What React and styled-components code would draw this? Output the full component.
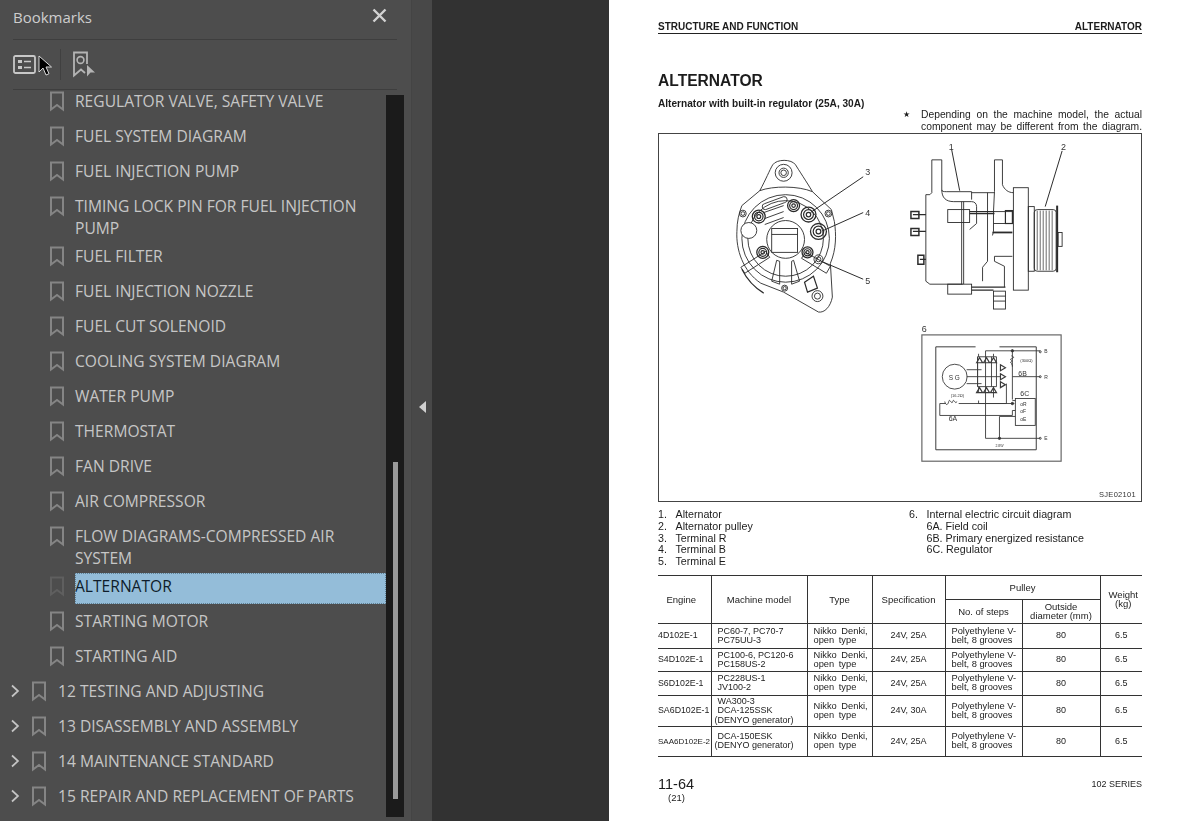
import React from "react";
import styled, { createGlobalStyle } from "styled-components";

const GlobalStyle = createGlobalStyle`
  html, body {
    margin: 0;
    padding: 0;
    height: 821px;
    overflow: hidden;
    background: #323232;
  }
`;

const bookmarks = [
  { label: "REGULATOR VALVE, SAFETY VALVE" },
  { label: "FUEL SYSTEM DIAGRAM" },
  { label: "FUEL INJECTION PUMP" },
  { label: "TIMING LOCK PIN FOR FUEL INJECTION PUMP" },
  { label: "FUEL FILTER" },
  { label: "FUEL INJECTION NOZZLE" },
  { label: "FUEL CUT SOLENOID" },
  { label: "COOLING SYSTEM DIAGRAM" },
  { label: "WATER PUMP" },
  { label: "THERMOSTAT" },
  { label: "FAN DRIVE" },
  { label: "AIR COMPRESSOR" },
  { label: "FLOW DIAGRAMS-COMPRESSED AIR SYSTEM" },
  { label: "ALTERNATOR", selected: true },
  { label: "STARTING MOTOR" },
  { label: "STARTING AID" },
  { label: "12 TESTING AND ADJUSTING", top: true },
  { label: "13 DISASSEMBLY AND ASSEMBLY", top: true },
  { label: "14 MAINTENANCE STANDARD", top: true },
  { label: "15 REPAIR AND REPLACEMENT OF PARTS", top: true },
];

const tableRows = [
  { h: 25, engine: "4D102E-1", model: ["PC60-7, PC70-7", "PC75UU-3"], spec: "24V, 25A" },
  { h: 23, engine: "S4D102E-1", model: ["PC100-6, PC120-6", "PC158US-2"], spec: "24V, 25A" },
  { h: 24, engine: "S6D102E-1", model: ["PC228US-1", "JV100-2"], spec: "24V, 25A" },
  { h: 31, engine: "SA6D102E-1", model: ["WA300-3", "DCA-125SSK", "(DENYO generator)"], spec: "24V, 30A" },
  { h: 30, engine: "SAA6D102E-2", model: ["DCA-150ESK", "(DENYO generator)"], spec: "24V, 25A", small: true },
];

const BookmarkIcon = ({ faded }) => (
  <svg width="14" height="21" viewBox="0 0 14 21" fill="none" stroke={faded ? "#5f5f5f" : "#858585"} strokeWidth="2">
    <path d="M1 1.500h12v17l-6-4.500-6 4.500z" />
  </svg>
);

const Chevron = () => (
  <svg width="10" height="14" viewBox="0 0 10 14" fill="none" stroke="#c4c4c4" strokeWidth="1.700">
    <path d="M2 1.500 8 7l-6 5.500" />
  </svg>
);

const Lug = ({ x, y, r }) => (
  <g>
    <circle cx={x} cy={y} r={r} />
    <circle cx={x} cy={y} r={r * 0.55} />
  </g>
);

const Stud = ({ x, y, r }) => (
  <g>
    <circle cx={x} cy={y} r={r} strokeWidth="1.300" />
    <circle cx={x} cy={y} r={r * 0.66} strokeWidth="1.200" />
    <circle cx={x} cy={y} r={r * 0.3} strokeWidth="1.200" />
  </g>
);

// 부품도: 왼쪽 배면, 오른쪽 측면, 아래 회로도
const Drawing = () => (
  <DrawingSvg viewBox="658 134 484 367" fill="none" stroke="#2b2b2b" strokeWidth="0.9">
    <g>
      <path d="M759 191C765 180 769 170 772 165C776 159 791 159 795 165C798 170 806 182 812 192" />
      <path d="M741 206 759 191C772 186 798 186 812 192L831 210L834 222C836 235 836 250 830 264L832 298C830 308 824 314 818 313L783 293L760 284C742 272 735 250 736 232C736 222 738 214 741 206z" />
      <Lug x={783} y={173} r={8.500} />
      <circle cx={783} cy={173} r={2.800} />
      <circle cx={785} cy={239} r={44} />
      <circle cx={785} cy={239} r={38} />
      <circle cx={785} cy={240} r={19} />
      <rect x={771} y={229} width={26} height={24} />
      <path d="M771 235h26" />
      <path d="M764 204 783 197a3 3 0 0 1 1 6l-19 7a3 3 0 0 1-1-6zM763 213l20-7M764 219l19-7M764 225l19-7" />
      <circle cx={748} cy={231} r={8} fill="#fff" />
      <Stud x={758} y={217} r={6.500} />
      <Stud x={793} y={206} r={6} />
      <Stud x={808} y={215} r={7.500} />
      <Stud x={818} y={232} r={8} />
      <Stud x={762} y={253} r={6} />
      <Stud x={807} y={253} r={5.500} />
      <Lug x={818} y={260} r={4.500} />
      <Lug x={817} y={297} r={5.500} />
      <Lug x={742} y={214} r={3.400} />
      <Lug x={828} y={214} r={3.400} />
      <Lug x={784} y={289} r={3} />
      <path d="M740 268 765 252l4 6-25 16zM830 267 805 253l-4 6 25 15z" />
      <path d="M776 261 771 282l8 3V262zM793 261l6 21-8 3V262z" />
      <path d="M804 283l9-6 4 12-10 4zM741 270c5 10 12 18 22 24" strokeWidth="1.200" />
      <path d="M810 213 863 177M823 231 863 213M821 262 863 280" strokeWidth="1" />
    </g>
    <g>
      <path d="M932 160h10v30c0 2 2 2 5 2h25v8M932 160v33l-2 2h-4v87l4 3h33" />
      <path d="M942 190c0 8 4 12 12 12h18c3 0 5 2 5 5v17l-7 6M962 202v83M964 202v83" />
      <path d="M995 160h8v25c2 5 6 8 11 8M995 160v32l-1 20v20l-1 4" />
      <path d="M972 193h23M988 193v69l-5 6v14" />
      <rect x={948} y={210} width={22} height={13} />
      <path d="M970 212h25M970 214h25" strokeWidth="1.300" />
      <rect x={1006} y={211} width={7} height={13} strokeWidth="1.200" />
      <path d="M994 212h19M994 224h19" />
      <path d="M993 233h20" strokeWidth="1.800" />
      <path d="M995 257h18M1005 267v21M995 257v5l10 5" />
      <rect x={1014} y={188} width={15} height={103} />
      <rect x={1029} y={207} width={6} height={65} />
      <rect x={1035} y={210} width={22} height={62} rx={3} />
      <path d="M1038 211v60M1041 211v60M1044 211v60M1047 211v60M1050 211v60M1053 211v60" strokeWidth="0.7" />
      <path d="M1058 206v67" strokeWidth="2" />
      <rect x={1059} y={233} width={4} height={14} />
      <rect x={994} y={292} width={12} height={18} />
      <path d="M994 297h12M994 302h12" />
      <rect x={948} y={285} width={24} height={10} />
      <path d="M972 288h34M972 291h22" strokeWidth="1.200" />
      <path d="M913 215h13M913 232h13M920 260h6" strokeWidth="1.200" />
      <path d="M911 212h8v7h-8zM911 229h8v7h-8zM918 256h6v9h-6z" strokeWidth="1.500" />
      <path d="M952 150 960 191M1063 151 1046 207" strokeWidth="1" />
    </g>
    <g stroke="#3a3a3a">
      <rect x={922} y={336} width={140} height={127} strokeWidth="1.200" stroke="#666" />
      <path d="M976 348h-40v103.500h101V348h-37" strokeWidth="1" />
      <circle cx={955} cy={378} r={12.500} />
      <path d="M967 371h15M967 378h34M967 385h15" />
      <path d="M986 352h55M1013 352v16M1013 366v35M986 352v88h55" />
      <path d="M978 358h19v30h-19zM978 358v30" />
      <path d="M992 358v30" />
      <path d="M977 364l3-5 3 5zM984 364l3-5 3 5zM991 364l3-5 3 5zM977 394l3-5 3 5zM984 394l3-5 3 5zM991 394l3-5 3 5z" strokeWidth="1.200" />
      <path d="M1001 366l5 3-5 3zM1001 375l5 3-5 3zM1001 383l5 3-5 3z" strokeWidth="1.200" />
      <path d="M979 358v-3M979 388v6M994 355v3M994 388v11M979 402v3h28v-20M1013 378h28" />
      <path d="M940 405h6M959 405h56M940 405v12h73v-5h3" />
      <path d="M1000 440v-22h16" />
      <path d="M945 403c1 4 3 4 4 0s3 4 4 0 3 4 4 0" />
      <path d="M1012 357c3 1 3 2 0 3s3 2 0 3 3 2 0 3" />
      <rect x={1016} y={400} width={20} height={27} />
      <path d="M1013 402h3" />
      <circle cx={1041} cy={353} r={1} />
      <circle cx={1041} cy={378} r={1} />
      <circle cx={1041} cy={440} r={1} />
      <circle cx={1013} cy={352} r={1.200} fill="#333" />
      <circle cx={1000} cy={440} r={1.200} fill="#333" />
      <circle cx={1013} cy={405} r={1.200} fill="#333" />
    </g>
    <DrawingLabel x={865} y={175}>3</DrawingLabel>
    <DrawingLabel x={865} y={216}>4</DrawingLabel>
    <DrawingLabel x={865} y={285}>5</DrawingLabel>
    <DrawingLabel x={949} y={150}>1</DrawingLabel>
    <DrawingLabel x={1062} y={150}>2</DrawingLabel>
    <DrawingLabel x={922} y={333}>6</DrawingLabel>
    <CircuitLabel x={949} y={381} $size={6.500}>S G</CircuitLabel>
    <CircuitLabel x={951} y={398} $size={4}>(16.2Ω)</CircuitLabel>
    <CircuitLabel x={949} y={423} $size={7}>6A</CircuitLabel>
    <CircuitLabel x={1019} y={377} $size={7}>6B</CircuitLabel>
    <CircuitLabel x={1021} y={397} $size={7}>6C</CircuitLabel>
    <CircuitLabel x={1021} y={363} $size={4}>(300Ω)</CircuitLabel>
    <CircuitLabel x={1045} y={354} $size={5}>B</CircuitLabel>
    <CircuitLabel x={1045} y={380} $size={5}>R</CircuitLabel>
    <CircuitLabel x={1045} y={442} $size={5}>E</CircuitLabel>
    <CircuitLabel x={1021} y={408} $size={5}>oR</CircuitLabel>
    <CircuitLabel x={1021} y={415} $size={5}>oF</CircuitLabel>
    <CircuitLabel x={1021} y={423} $size={5}>oE</CircuitLabel>
    <CircuitLabel x={996} y={449} $size={3.500}>2.8W</CircuitLabel>
  </DrawingSvg>
);

const App = () => {
  return (
    <>
      <GlobalStyle />
      <Screen>
        <Sidebar>
          <PanelHeader>
            <PanelTitle>Bookmarks</PanelTitle>
            <CloseIcon width="15" height="15" viewBox="0 0 15 15" fill="none" stroke="#d2d2d2" strokeWidth="2.400">
              <path d="M1.500 1.500l12 12M13.500 1.500l-12 12" />
            </CloseIcon>
          </PanelHeader>
          <Toolbar>
            <svg width="24" height="20" viewBox="0 0 24 20" fill="none">
              <rect x="1" y="1" width="21" height="17" rx="1.500" stroke="#c8c8c8" strokeWidth="1.800" />
              <rect x="5" y="5" width="4" height="3" fill="#c8c8c8" />
              <rect x="5" y="11" width="4" height="3" fill="#c8c8c8" />
              <path d="M11 6.500h7M11 12.500h7" stroke="#c8c8c8" strokeWidth="1.500" />
            </svg>
            <Cursor width="14" height="22" viewBox="0 0 14 22">
              <path d="M1 1v16l4-4 3 7 3-1.300-3-6.700h5.500z" fill="#000" stroke="#d8d8d8" strokeWidth="1" />
            </Cursor>
            <ToolDivider />
            <svg width="23" height="27" viewBox="0 0 23 27" fill="none">
              <path d="M14 13V1.500H1v23l7-6 4 3.500" stroke="#b4b4b4" strokeWidth="1.800" />
              <circle cx="7.500" cy="9" r="3.400" stroke="#b4b4b4" strokeWidth="1.600" />
              <path d="M14 14l8 7.500h-4.500l-3.500 4z" fill="#b4b4b4" />
            </svg>
          </Toolbar>
          <ListArea>
            <List>
              {bookmarks.map((b) => (
                <Row key={b.label} $top={b.top}>
                  {b.top && (
                    <ChevronCell>
                      <Chevron />
                    </ChevronCell>
                  )}
                  <IconCell $top={b.top}>
                    <BookmarkIcon faded={b.selected} />
                  </IconCell>
                  <Label $selected={b.selected}>{b.label}</Label>
                </Row>
              ))}
            </List>
            <ScrollTrack>
              <ScrollThumb />
            </ScrollTrack>
          </ListArea>
        </Sidebar>
        <Splitter>
          <svg width="9" height="14" viewBox="0 0 9 14">
            <path d="M8 1v12L1 7z" fill="#d0d0d0" />
          </svg>
        </Splitter>
        <Gutter />
        <Page>
          <RunningHead>
            <span>STRUCTURE AND FUNCTION</span>
            <span>ALTERNATOR</span>
          </RunningHead>
          <Title>ALTERNATOR</Title>
          <Subtitle>Alternator with built-in regulator (25A, 30A)</Subtitle>
          <Note>
            <Star>★</Star>
            <NoteText>
              <NoteLine>Depending on the machine model, the actual</NoteLine>
              <NoteLine>component may be different from the diagram.</NoteLine>
            </NoteText>
          </Note>
          <DiagramBox>
            <Drawing />
            <DrawingCode>SJE02101</DrawingCode>
          </DiagramBox>
          <Legend>
            <LegendColumn $first>
              <LegendItem><b>1.</b>Alternator</LegendItem>
              <LegendItem><b>2.</b>Alternator pulley</LegendItem>
              <LegendItem><b>3.</b>Terminal R</LegendItem>
              <LegendItem><b>4.</b>Terminal B</LegendItem>
              <LegendItem><b>5.</b>Terminal E</LegendItem>
            </LegendColumn>
            <LegendColumn>
              <LegendItem><b>6.</b>Internal electric circuit diagram</LegendItem>
              <LegendItem><b>&nbsp;</b>6A. Field coil</LegendItem>
              <LegendItem><b>&nbsp;</b>6B. Primary energized resistance</LegendItem>
              <LegendItem><b>&nbsp;</b>6C. Regulator</LegendItem>
            </LegendColumn>
          </Legend>
          <SpecTable>
            <colgroup>
              <col style={{ width: 53 }} />
              <col style={{ width: 96 }} />
              <col style={{ width: 65 }} />
              <col style={{ width: 73 }} />
              <col style={{ width: 77 }} />
              <col style={{ width: 78 }} />
              <col style={{ width: 42 }} />
            </colgroup>
            <thead>
              <HeadRow>
                <EngineHead rowSpan={2}>Engine</EngineHead>
                <Th rowSpan={2}>Machine model</Th>
                <Th rowSpan={2}>Type</Th>
                <Th rowSpan={2}>Specification</Th>
                <Th colSpan={2}>Pulley</Th>
                <WeightHead rowSpan={2}>Weight<br />(kg)</WeightHead>
              </HeadRow>
              <HeadRow>
                <Th>No. of steps</Th>
                <Th>Outside<br />diameter (mm)</Th>
              </HeadRow>
            </thead>
            <tbody>
              {tableRows.map((r) => (
                <tr key={r.engine} style={{ height: r.h }}>
                  <EngineCell $small={r.small}>{r.engine}</EngineCell>
                  <ModelCell>
                    {r.model.map((m) => (
                      <div key={m}>{m.startsWith("(") ? m : <Indent>{m}</Indent>}</div>
                    ))}
                  </ModelCell>
                  <TextCell $spread>Nikko Denki,<br />open type</TextCell>
                  <Td>{r.spec}</Td>
                  <TextCell>Polyethylene V-<br />belt, 8 grooves</TextCell>
                  <Td>80</Td>
                  <Td>6.5</Td>
                </tr>
              ))}
            </tbody>
          </SpecTable>
          <PageFooter>
            <div>
              <PageNumber>11-64</PageNumber>
              <PageSub>(21)</PageSub>
            </div>
            <Series>102 SERIES</Series>
          </PageFooter>
        </Page>
      </Screen>
    </>
  );
};

export default App;

const Screen = styled.div`
  display: flex;
  width: 1200px;
  height: 821px;
  overflow: hidden;
  font-family: "Liberation Sans", Arial, sans-serif;
`;

const Sidebar = styled.aside`
  width: 411px;
  flex: none;
  display: flex;
  flex-direction: column;
  background: #4d4d4d;
  border-right: 1px solid #444;
  box-sizing: content-box;
`;

const PanelHeader = styled.div`
  height: 39px;
  margin: 0 14px 0 13px;
  display: flex;
  align-items: center;
  justify-content: space-between;
  border-bottom: 1px solid #3e3e3e;
`;

const PanelTitle = styled.div`
  font-family: "Open Sans", sans-serif;
  font-size: 15px;
  color: #cdcdcd;
  margin-top: -6px;
`;

const CloseIcon = styled.svg`
  margin: -8px 10px 0 0;
`;

const Toolbar = styled.div`
  position: relative;
  height: 49px;
  margin: 0 14px 0 13px;
  display: flex;
  align-items: center;
  border-bottom: 1px solid #3e3e3e;
`;

const Cursor = styled.svg`
  position: absolute;
  left: 25px;
  top: 15px;
`;

const ToolDivider = styled.div`
  width: 1px;
  height: 31px;
  background: #404040;
  margin: 0 12px 0 23px;
`;

const ListArea = styled.div`
  flex: 1;
  display: flex;
  min-height: 0;
`;

const List = styled.div`
  width: 386px;
  flex: none;
  margin-top: -3px;
`;

const Row = styled.div`
  display: flex;
  align-items: flex-start;
  min-height: 35px;
  box-sizing: border-box;
  padding: 3px 0 3px ${(p) => (p.$top ? "10px" : "50px")};
`;

const ChevronCell = styled.div`
  width: 22px;
  height: 22px;
  display: flex;
  align-items: center;
`;

const IconCell = styled.div`
  width: ${(p) => (p.$top ? "26px" : "25px")};
  height: 22px;
  flex: none;
  display: flex;
  align-items: center;
`;

const Label = styled.div`
  flex: 1;
  font-family: "Open Sans", sans-serif;
  font-size: 15.600px;
  line-height: 22px;
  color: ${(p) => (p.$selected ? "#0f1d2b" : "#c6c6c6")};
  background: ${(p) => (p.$selected ? "#94bdd9" : "transparent")};
  outline: ${(p) => (p.$selected ? "1px dotted #5f7f93" : "none")};
  outline-offset: -1px;
  margin: ${(p) => (p.$selected ? "-2px 0 -3px" : "0")};
  padding: ${(p) => (p.$selected ? "2px 0 7px" : "0")};
  padding-right: 8px;
`;

const ScrollTrack = styled.div`
  width: 18px;
  height: 722px;
  margin-top: 5px;
  flex: none;
  background: #1b1b1b;
  position: relative;
`;

const ScrollThumb = styled.div`
  position: absolute;
  left: 7px;
  right: 6px;
  top: 367px;
  height: 337px;
  background: #9a9a9a;
`;

const Splitter = styled.div`
  width: 20px;
  flex: none;
  display: flex;
  align-items: center;
  justify-content: center;
  background: #484848;
  padding-bottom: 8px;
  box-sizing: border-box;
`;

const Gutter = styled.div`
  width: 177px;
  flex: none;
  background: #323232;
`;

const Page = styled.main`
  width: 591px;
  flex: none;
  background: #fff;
  color: #1c1c1c;
  box-sizing: border-box;
  padding: 21px 58px 0 49px;
  filter: blur(0.3px);
`;

const RunningHead = styled.div`
  display: flex;
  justify-content: space-between;
  font-size: 10px;
  font-weight: 700;
  line-height: 12px;
  border-bottom: 1px solid #222;
`;

const Title = styled.h1`
  margin: 37px 0 0;
  font-size: 15.600px;
  line-height: 19px;
  font-weight: 700;
`;

const Subtitle = styled.div`
  margin-top: 8px;
  font-size: 10.100px;
  line-height: 11px;
  font-weight: 700;
`;

const Note = styled.div`
  display: flex;
  justify-content: flex-end;
  font-size: 10.300px;
  line-height: 11.500px;
`;

const Star = styled.span`
  width: 18px;
  font-size: 8px;
`;

const NoteText = styled.div`
  width: 221px;
`;

const NoteLine = styled.div`
  text-align: justify;
  text-align-last: justify;
`;

const DiagramBox = styled.div`
  position: relative;
  height: 367px;
  margin-top: 1px;
  border: 1px solid #444;
  box-sizing: content-box;
  width: 482px;
`;

const DrawingSvg = styled.svg`
  display: block;
  width: 482px;
  height: 365px;
`;

const DrawingLabel = styled.text`
  font-family: "Liberation Sans", sans-serif;
  font-size: 9px;
  fill: #333;
  stroke: none;
`;

const CircuitLabel = styled.text`
  font-family: "Liberation Sans", sans-serif;
  font-size: ${(p) => p.$size}px;
  fill: #333;
  stroke: none;
`;

const DrawingCode = styled.div`
  position: absolute;
  right: 5px;
  bottom: 2px;
  font-size: 7.500px;
  letter-spacing: 0.3px;
  color: #333;
`;

const Legend = styled.div`
  display: flex;
  margin-top: 7px;
  font-size: 10.700px;
  line-height: 11.800px;
`;

const LegendColumn = styled.div`
  flex: ${(p) => (p.$first ? "0 0 251px" : "1")};
`;

const LegendItem = styled.div`
  display: flex;
  b {
    font-weight: 400;
    width: 17.500px;
  }
`;

const SpecTable = styled.table`
  width: 484px;
  margin-top: 7px;
  border-collapse: collapse;
  table-layout: fixed;
  font-size: 9px;
  line-height: 9.300px;
  border-top: 1px solid #555;
  border-bottom: 1px solid #555;
`;

const HeadRow = styled.tr`
  height: 24px;
`;

const Th = styled.th`
  font-weight: 400;
  font-size: 9.500px;
  text-align: center;
  padding: 0;
  border: 1px solid #333;
`;

const EngineHead = styled(Th)`
  border-left: none;
  padding-right: 6px;
`;

const WeightHead = styled(Th)`
  border-right: none;
  padding-left: 4px;
`;

const Td = styled.td`
  text-align: center;
  padding: 0;
  border: 1px solid #333;
  &:last-child {
    border-right: none;
  }
`;

const EngineCell = styled(Td)`
  border-left: none;
  text-align: left;
  white-space: nowrap;
  font-size: ${(p) => (p.$small ? "8px" : "8.800px")};
`;

const TextCell = styled(Td)`
  text-align: left;
  padding-left: 6px;
  white-space: nowrap;
  font-size: 9.300px;
  word-spacing: ${(p) => (p.$spread ? "2px" : "0")};
`;

const ModelCell = styled(Td)`
  text-align: left;
  padding-left: 3px;
  white-space: nowrap;
`;

const Indent = styled.span`
  padding-left: 3px;
`;

const PageFooter = styled.div`
  display: flex;
  justify-content: space-between;
  margin-top: 19px;
`;

const PageNumber = styled.div`
  font-size: 14.500px;
  line-height: 16px;
`;

const PageSub = styled.div`
  font-size: 9.500px;
  line-height: 10px;
  margin: 1px 0 0 10px;
`;

const Series = styled.div`
  font-size: 9px;
  line-height: 16px;
`;
